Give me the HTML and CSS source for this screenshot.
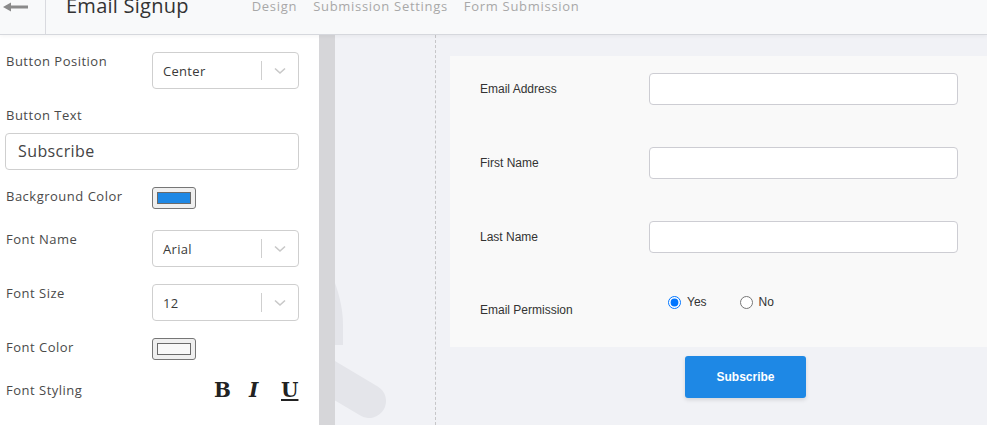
FILE: index.html
```html
<!DOCTYPE html>
<html>
<head>
<meta charset="utf-8">
<link rel="stylesheet" href="styles.css">
</head>
<body>
<div class="app">
  <header class="topbar">
    <div class="back">
      <svg width="26" height="10" viewBox="0 0 26 10"><path d="M0 5 L8 0.5 L8 3.6 L25 3.6 L25 6.4 L8 6.4 L8 9.5 Z" fill="#8a8a8a"/></svg>
    </div>
    <div class="title">Email Signup</div>
    <nav class="tabs">
      <span class="tab">Design</span>
      <span class="tab">Submission Settings</span>
      <span class="tab">Form Submission</span>
    </nav>
  </header>
  <div class="main">
    <aside class="panel">
      <div class="row r1">
        <div class="label">Button Position</div>
        <div class="select"><span class="sel-val">Center</span><span class="sep"></span><svg class="chev" width="12" height="8" viewBox="0 0 12 8"><path d="M1 1.5 L6 6 L11 1.5" fill="none" stroke="#c8c8c8" stroke-width="1.6"/></svg></div>
      </div>
      <div class="label block r2">Button Text</div>
      <div class="text-input">Subscribe</div>
      <div class="row r3">
        <div class="label">Background Color</div>
        <div class="swatch"><span class="swatch-fill blue"></span></div>
      </div>
      <div class="row r4">
        <div class="label">Font Name</div>
        <div class="select"><span class="sel-val">Arial</span><span class="sep"></span><svg class="chev" width="12" height="8" viewBox="0 0 12 8"><path d="M1 1.5 L6 6 L11 1.5" fill="none" stroke="#c8c8c8" stroke-width="1.6"/></svg></div>
      </div>
      <div class="row r5">
        <div class="label">Font Size</div>
        <div class="select"><span class="sel-val">12</span><span class="sep"></span><svg class="chev" width="12" height="8" viewBox="0 0 12 8"><path d="M1 1.5 L6 6 L11 1.5" fill="none" stroke="#c8c8c8" stroke-width="1.6"/></svg></div>
      </div>
      <div class="row r6">
        <div class="label">Font Color</div>
        <div class="swatch"><span class="swatch-fill light"></span></div>
      </div>
      <div class="row r7">
        <div class="label">Font Styling</div>
        <div class="styling"><span class="st b">B</span><span class="st i">I</span><span class="st u">U</span></div>
      </div>
    </aside>
    <div class="scrolltrack"></div>
    <section class="canvas">
      <svg class="watermark" width="120" height="390" viewBox="0 0 120 390">
        <path d="M0 248 C5 262 8 276 8 290 L8 310 L0 310 Z" fill="#e4e5ea"/>
        <line x1="-30" y1="328" x2="34" y2="366" stroke="#e4e5ea" stroke-width="34" stroke-linecap="round"/>
      </svg>
      <div class="stage">
        <div class="card">
          <div class="frow">
            <div class="flabel">Email Address</div>
            <div class="finput"></div>
          </div>
          <div class="frow">
            <div class="flabel">First Name</div>
            <div class="finput"></div>
          </div>
          <div class="frow">
            <div class="flabel">Last Name</div>
            <div class="finput"></div>
          </div>
          <div class="frow perm">
            <div class="flabel plabel">Email Permission</div>
            <div class="radios">
              <label class="radio yes"><input type="radio" name="perm" checked><span>Yes</span></label>
              <label class="radio"><input type="radio" name="perm"><span>No</span></label>
            </div>
          </div>
        </div>
        <div class="btnrow"><button class="subscribe">Subscribe</button></div>
      </div>
    </section>
  </div>
</div>
</body>
</html>
```
FILE: styles.css
```css
* { box-sizing: border-box; }
html, body { margin: 0; padding: 0; }
body {
  width: 987px;
  height: 425px;
  overflow: hidden;
  font-family: "Open Sans", "Liberation Sans", sans-serif;
  color: #4a4a4a;
  background: #fff;
}
.app { width: 987px; height: 425px; overflow: hidden; display: flex; flex-direction: column; }

.topbar {
  height: 35px;
  flex: none;
  display: flex;
  align-items: flex-start;
  background: #f8f9fa;
  border-bottom: 1px solid #d6d8dd;
  box-shadow: 0 1px 4px rgba(0,0,0,0.05);
  position: relative;
  z-index: 2;
}
.back {
  width: 46px;
  height: 34px;
  border-right: 1px solid #d9dadf;
  padding: 2px 0 0 3px;
}
.back svg { display: block; }
.title {
  margin-left: 20px;
  margin-top: -4px;
  font-size: 20px;
  line-height: 20px;
  font-weight: 500;
  color: #333;
  letter-spacing: 0.25px;
}
.tabs { display: flex; gap: 16px; margin-left: 63px; margin-top: -1px; }
.tab { font-size: 13px; line-height: 14px; color: #a8a8a8; letter-spacing: 0.7px; }

.main { flex: 1; display: flex; min-height: 0; }
.panel { width: 319px; flex: none; background: #fff; padding: 17px 0 0 0; }
.scrolltrack { width: 16px; flex: none; background: #d6d6d9; }
.canvas { flex: 1; background: #f1f2f6; position: relative; overflow: hidden; }

.row { display: flex; align-items: flex-start; }
.label { width: 152px; flex: none; padding-left: 6px; font-size: 13px; line-height: 18px; color: #4a4a4a; letter-spacing: 0.5px; }
.label.block { width: auto; }
.r2 { margin-top: 17px; }
.r3 { margin-top: 17px; }
.r4 { margin-top: 21px; }
.r5 { margin-top: 17px; }
.r6 { margin-top: 17px; }
.r7 { margin-top: 21px; }

.select {
  width: 147px;
  height: 37px;
  border: 1px solid #cfcfcf;
  border-radius: 4px;
  display: flex;
  align-items: center;
  padding-left: 10px;
}
.sel-val { flex: 1; font-size: 13px; color: #3a3a3a; letter-spacing: 0.3px; }
.sep { width: 1px; height: 19px; background: #cfcfcf; margin-right: 12px; }
.chev { margin-right: 12px; }

.text-input {
  margin: 9px 0 0 5px;
  width: 294px;
  height: 37px;
  border: 1px solid #cfcfcf;
  border-radius: 4px;
  padding-left: 12px;
  font-size: 16px;
  line-height: 35px;
  color: #444;
  letter-spacing: 0.4px;
}

.swatch {
  width: 44px;
  height: 22px;
  border: 1px solid #767676;
  border-radius: 3px;
  background: #efefef;
  padding: 4px;
}
.swatch-fill { display: block; width: 100%; height: 100%; border: 1px solid #6a6a6a; }
.swatch-fill.blue { background: #1e88e5; }
.swatch-fill.light { background: #f8f8f8; }

.styling { display: flex; margin-left: 62px; margin-top: -3px; font-family: "DejaVu Serif", "Liberation Serif", serif; font-size: 20px; line-height: 24px; color: #222; }
.st { display: inline-block; }
.st.b { font-weight: bold; width: 35px; }
.st.i { font-style: italic; font-weight: bold; width: 32px; }
.st.u { font-weight: bold; text-decoration: underline; text-underline-offset: 2px; }

.watermark { position: absolute; left: 0; top: 0; }
.stage {
  position: relative;
  margin-left: 100px;
  height: 100%;
  border-left: 1px dashed #c6c6c8;
  padding: 21px 0 0 14px;
}
.card {
  width: 590px;
  background: #f9f9f9;
  padding: 17px 0 0 30px;
  height: 291px;
}
.frow { display: flex; align-items: center; height: 32px; margin-bottom: 42px; }
.flabel { width: 169px; flex: none; font-family: "Liberation Sans", Arial, sans-serif; font-size: 12px; color: #333; }
.finput {
  width: 309px;
  height: 32px;
  background: #fff;
  border: 1px solid #cdcdd3;
  border-radius: 4px;
}
.frow.perm { align-items: flex-start; height: auto; margin: 0; }
.plabel { padding-top: 8px; line-height: 14px; }
.radios { display: flex; padding-left: 19px; }
.radio { display: flex; align-items: center; font-family: "Liberation Sans", Arial, sans-serif; font-size: 12px; color: #333; }
.radio input { margin: 0 6px 0 0; width: 13px; height: 13px; }
.radio.yes { margin-right: 33px; }

.btnrow { padding: 9px 0 0 235px; }
.subscribe {
  width: 121px;
  height: 42px;
  border: none;
  border-radius: 3px;
  background: #1e88e5;
  color: #fff;
  font-family: "Liberation Sans", Arial, sans-serif;
  font-weight: bold;
  font-size: 12px;
  box-shadow: 0 2px 4px rgba(0,0,0,0.12);
}
```
